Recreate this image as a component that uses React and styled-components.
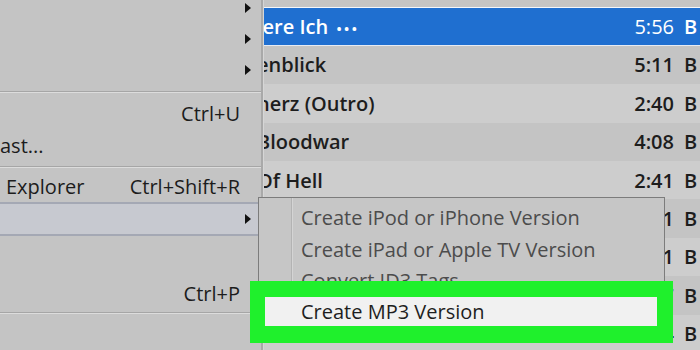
import React from 'react';
import styled, { createGlobalStyle } from 'styled-components';

const Global = createGlobalStyle`
  html, body { margin: 0; padding: 0; background: #c4c4c4; }
  body { font-family: "Open Sans", "Noto Sans", sans-serif; }
`;

const Screen = styled.div`
  position: relative;
  width: 700px;
  height: 350px;
  overflow: hidden;
  background: #c8c8c8;
`;

const TrackList = styled.div`
  display: flex;
  flex-direction: column;
  margin-top: -31px;
`;

const Track = styled.div`
  display: grid;
  grid-template-columns: 1fr 60px 26px;
  align-items: center;
  height: 38.4px;
  flex: none;
  box-sizing: border-box;
  padding-left: 257px;
  font-size: 20px;
  font-weight: 600;
  color: ${p => (p.selected ? '#ffffff' : '#1d1d1d')};
  background: ${p => (p.selected ? '#1f6fd0' : p.alt ? '#cdcdcd' : '#c4c4c4')};
  border-top: ${p => (p.selected ? '1px solid #f4f6fa' : 'none')};
  border-bottom: ${p => (p.selected ? '1px solid #e6ebf3' : 'none')};
`;

const Title = styled.span`
  white-space: nowrap;
  overflow: hidden;
`;

const Dots = styled.span`
  margin-left: 8px;
  letter-spacing: 2px;
  font-size: 15px;
`;

const Time = styled.span`
  text-align: right;
  font-weight: ${p => (p.selected ? 400 : 600)};
`;

const Artist = styled.span`
  padding-left: 10px;
`;

const Menu = styled.div`
  position: absolute;
  left: 0;
  top: 0;
  width: 261px;
  height: 360px;
  margin-top: -8px;
  background: #c4c4c4;
  border-right: 2px solid #a9a9a9;
  box-shadow: 1px 0 0 #d6d6d6;
  display: flex;
  flex-direction: column;
`;

const Item = styled.div`
  display: flex;
  align-items: center;
  justify-content: space-between;
  height: ${p => p.h || 32}px;
  flex: none;
  box-sizing: border-box;
  padding: 0 21px 0 ${p => p.indent || 0}px;
  font-size: 20px;
  color: #1c1c1c;
  position: relative;
  background: ${p => (p.hot ? '#c7c9d0' : 'transparent')};
  border-top: ${p => (p.hot ? '2px solid #a4a8b4' : 'none')};
  border-bottom: ${p => (p.hot ? '2px solid #a4a8b4' : 'none')};
`;

const Arrow = styled.span`
  position: absolute;
  right: 10px;
  top: 50%;
  margin-top: -5px;
  width: 0;
  height: 0;
  border-top: 5px solid transparent;
  border-bottom: 5px solid transparent;
  border-left: 6px solid #111;
`;

const Separator = styled.div`
  height: ${p => p.h || 8}px;
  flex: none;
  display: flex;
  align-items: center;
  &::after {
    content: '';
    display: block;
    width: 100%;
    height: 1px;
    background: #a6a6a6;
    box-shadow: 0 1px 0 #dcdcdc;
  }
`;

const Submenu = styled.div`
  position: absolute;
  left: 258px;
  top: 197px;
  width: 407px;
  height: 139px;
  box-sizing: border-box;
  background: #c6c6c6;
  border: 1px solid #7c7c7c;
  padding-top: 4px;
  display: flex;
  flex-direction: column;
  &::before {
    content: '';
    position: absolute;
    left: 32px;
    top: 0;
    bottom: 0;
    width: 1px;
    background: #b3b3b3;
    box-shadow: 1px 0 0 #d4d4d4;
  }
`;

const SubItem = styled.div`
  height: 31.5px;
  flex: none;
  display: flex;
  align-items: center;
  padding-left: 42px;
  font-size: 20px;
  color: #4c4c4c;
  white-space: nowrap;
`;

const Callout = styled.div`
  position: absolute;
  left: 250px;
  top: 281px;
  width: 423px;
  height: 62px;
  box-sizing: border-box;
  background: #1ff02c;
  padding: 16px 16px 17px 15px;
  display: flex;
`;

const Highlight = styled.div`
  flex: 1;
  background: #f1f1f1;
  display: flex;
  align-items: center;
  padding-left: 36px;
  font-size: 20px;
  color: #1e1e1e;
  white-space: nowrap;
`;

const tracks = [
  { title: '', time: '', artist: '' },
  { title: 'lere Ich', time: '5:56', artist: 'B', selected: true, dots: true },
  { title: 'enblick', time: '5:11', artist: 'B' },
  { title: 'herz (Outro)', time: '2:40', artist: 'B', alt: true },
  { title: 'Bloodwar', time: '4:08', artist: 'B' },
  { title: 'Of Hell', time: '2:41', artist: 'B', alt: true },
  { title: 'Nachtwelt', time: '3:51', artist: 'B' },
  { title: 'Schattenlied', time: '4:21', artist: 'B', alt: true },
  { title: 'Bleibt', time: '3:27', artist: 'B' },
  { title: 'Heretics', time: '2:44', artist: 'B', alt: true },
];

export default function App() {
  return (
    <Screen>
      <Global />
      <TrackList>
        {tracks.map((t, i) => (
          <Track key={i} selected={t.selected} alt={t.alt}>
            <Title>
              {t.title}
              {t.dots && <Dots>•••</Dots>}
            </Title>
            <Time selected={t.selected}>{t.time}</Time>
            <Artist>{t.artist}</Artist>
          </Track>
        ))}
      </TrackList>

      <Menu>
        <Item h={31}><span /><Arrow /></Item>
        <Item h={31}><span /><Arrow /></Item>
        <Item h={31}><span /><Arrow /></Item>
        <Separator h={12} />
        <Item h={32}><span /><span>Ctrl+U</span></Item>
        <Item h={33}><span>ast...</span></Item>
        <Separator h={8} />
        <Item h={32} indent={6}><span>Explorer</span><span>Ctrl+Shift+R</span></Item>
        <Item h={34} hot><span /><Arrow /></Item>
        <Item h={41}><span /></Item>
        <Item h={32}><span /><span>Ctrl+P</span></Item>
        <Separator h={6} />
      </Menu>

      <Submenu>
        <SubItem>Create iPod or iPhone Version</SubItem>
        <SubItem>Create iPad or Apple TV Version</SubItem>
        <SubItem>Convert ID3 Tags</SubItem>
        <SubItem>Create MP3 Version</SubItem>
      </Submenu>

      <Callout>
        <Highlight>Create MP3 Version</Highlight>
      </Callout>
    </Screen>
  );
}
